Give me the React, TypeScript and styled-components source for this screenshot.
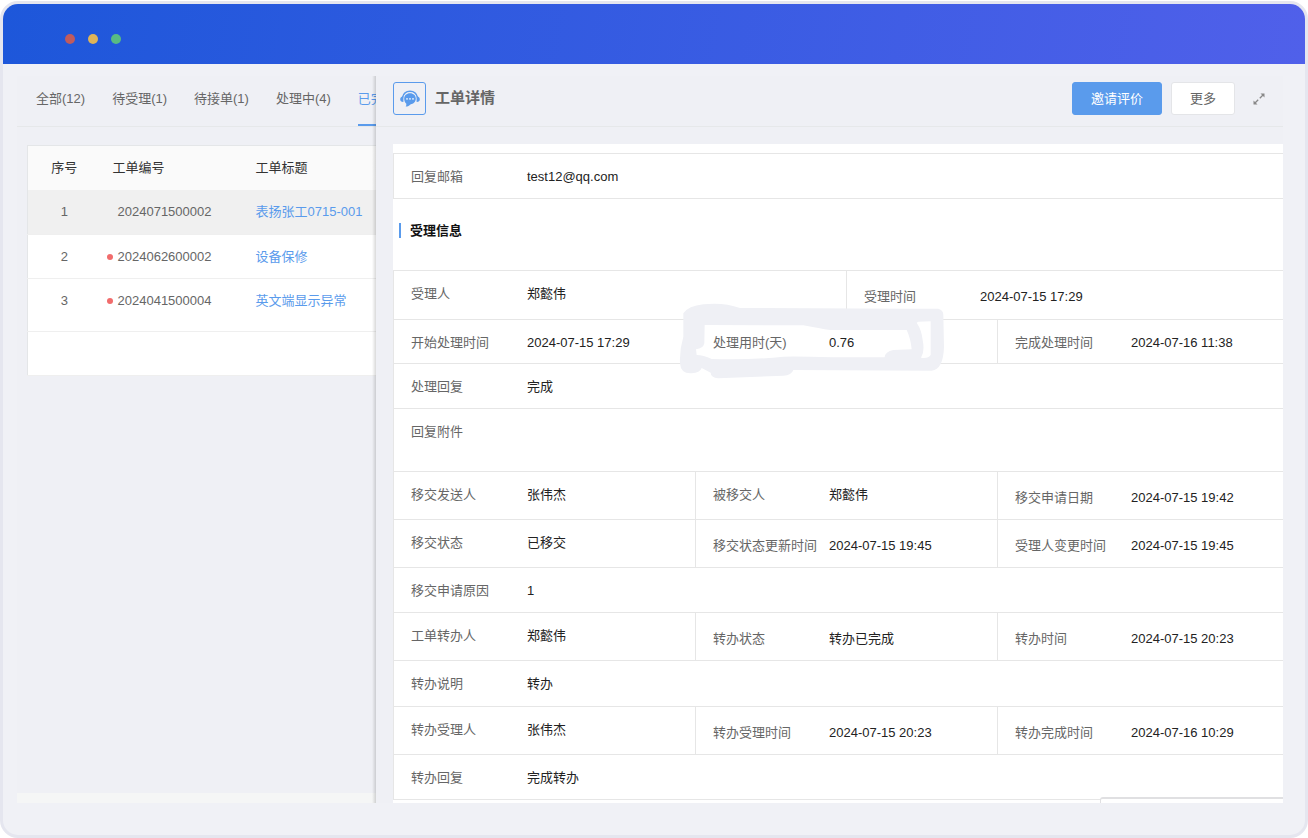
import React from 'react';
import styled, { createGlobalStyle } from 'styled-components';

const Global = createGlobalStyle`
  * { box-sizing: border-box; }
  body {
    margin: 0;
    background: #fff;
    font-family: "Liberation Sans", "Noto Sans CJK SC", sans-serif;
    font-size: 13px;
    line-height: 20px;
    color: #666;
  }
`;

const Page = styled.div`
  min-height: 100vh;
  display: flex;
  padding-top: 1px;
`;

const Frame = styled.div`
  flex: 1;
  min-width: 0;
  display: flex;
  flex-direction: column;
  border: 3px solid #e5e6ef;
  border-radius: 18px;
  background: #f0f1f6;
  overflow: hidden;
`;

const TitleBar = styled.header`
  height: 60px;
  display: flex;
  align-items: center;
  gap: 13px;
  padding: 10px 62px 0;
  background: linear-gradient(100deg, #1d57da, #5060ea);
`;

const Dot = styled.span<{ $color: string; $size?: number }>`
  flex: none;
  width: ${(p) => p.$size ?? 10}px;
  height: ${(p) => p.$size ?? 10}px;
  border-radius: 50%;
  background: ${(p) => p.$color};
`;

const Main = styled.main`
  flex: 1;
  display: flex;
  margin: 12px 22px 32px 14px;
  background: #eff0f5;
`;

const ListPane = styled.section`
  position: relative;
  flex: none;
  width: 359px;
  display: flex;
  flex-direction: column;
  overflow: hidden;
  &::after {
    content: "";
    position: absolute;
    top: 0;
    right: 0;
    bottom: 0;
    width: 4px;
    background: linear-gradient(to right, transparent, rgba(0, 0, 0, 0.15));
  }
`;

const ListFooter = styled.div`
  height: 10px;
  margin-top: auto;
  background: #f5f6f6;
`;

const Tabs = styled.nav`
  display: flex;
  gap: 27px;
  height: 51px;
  padding-left: 19px;
  border-bottom: 1px solid #e6e8ea;
`;

const Tab = styled.button<{ $active?: boolean }>`
  flex: none;
  height: 50px;
  padding: 0 0 3px;
  border: 0;
  border-bottom: 2px solid ${(p) => (p.$active ? '#5a9bec' : 'transparent')};
  background: none;
  font: inherit;
  color: ${(p) => (p.$active ? '#5a9bec' : '#666')};
`;

const Tickets = styled.table`
  width: 560px;
  flex: none;
  margin: 18px 0 0 10px;
  border: 1px solid #e4e6e8;
  border-collapse: collapse;
  table-layout: fixed;
  background: #fff;
`;

const Th = styled.th<{ $width?: number; $center?: boolean }>`
  width: ${(p) => (p.$width ? `${p.$width}px` : 'auto')};
  height: 44px;
  padding: 0 12px;
  background: #fafafa;
  font-weight: 400;
  color: #333;
  text-align: ${(p) => (p.$center ? 'center' : 'left')};
`;

const Row = styled.tr<{ $selected?: boolean; $height: number }>`
  height: ${(p) => p.$height}px;
  background: ${(p) => (p.$selected ? '#f0f0f0' : '#fff')};
  border-bottom: 1px solid #efefef;
`;

const Td = styled.td<{ $center?: boolean }>`
  padding: 12px 12px 0;
  vertical-align: top;
  text-align: ${(p) => (p.$center ? 'center' : 'left')};
`;

const TicketNo = styled.span`
  display: flex;
  align-items: center;
  gap: 5px;
  margin-left: -6px;
`;

const TicketLink = styled.a`
  color: #5a9bec;
  text-decoration: none;
  white-space: nowrap;
`;

const DetailPane = styled.section`
  flex: 1;
  min-width: 0;
  display: flex;
  flex-direction: column;
`;

const DetailHead = styled.div`
  height: 51px;
  display: flex;
  align-items: center;
  padding: 0 17px 5px;
  border-bottom: 1px solid #e6e8ea;
`;

const Badge = styled.span`
  display: grid;
  place-items: center;
  width: 33px;
  height: 33px;
  border: 1px solid #5a9bec;
  border-radius: 3px;
`;

const Title = styled.h1`
  flex: 1;
  margin: 0 0 2px 9px;
  font-size: 15px;
  font-weight: 700;
  color: #666;
`;

const Button = styled.button<{ $primary?: boolean }>`
  height: 33px;
  margin-left: 9px;
  padding: 0 18px;
  border: 1px solid ${(p) => (p.$primary ? '#5a9bec' : '#e4e5e8')};
  border-radius: 3px;
  background: ${(p) => (p.$primary ? '#5a9bec' : '#fff')};
  font: inherit;
  color: ${(p) => (p.$primary ? '#fff' : '#666')};
`;

const IconButton = styled.button`
  display: flex;
  margin-left: 17px;
  padding: 0;
  border: 0;
  background: none;
`;

const Sheet = styled.div`
  position: relative;
  flex: 1;
  margin: 17px 0 0 17px;
  padding-top: 9px;
  background: #fff;
  overflow: hidden;
`;

const Section = styled.h2`
  display: flex;
  align-items: center;
  height: 71px;
  margin: 0;
  padding: 0 6px 8px;
  font-size: 13px;
  font-weight: 700;
  color: #111;
  &::before {
    content: "";
    width: 2px;
    height: 15px;
    margin-right: 9px;
    background: #5a9bec;
  }
`;

const Fields = styled.dl`
  margin: 0 -16px 0 0;
  border: 1px solid #e6e6e6;
  border-right: 0;
`;

const FieldRow = styled.div<{ $height: number }>`
  position: relative;
  display: flex;
  height: ${(p) => p.$height}px;
  & + & { border-top: 1px solid #e6e6e6; }
`;

const Field = styled.div<{ $middle?: boolean }>`
  flex: 1 1 0;
  display: flex;
  align-items: ${(p) => (p.$middle ? 'center' : 'flex-start')};
  padding: ${(p) => (p.$middle ? '4px 0 0 17px' : '13px 0 0 17px')};
  white-space: nowrap;
  & + & { border-left: 1px solid #e6e6e6; }
`;

const Term = styled.dt`
  width: 116px;
  color: #666;
`;

const Value = styled.dd`
  margin: 0;
  color: #222;
`;

const Brush = styled.svg`
  position: absolute;
  left: 266px;
  top: -40px;
  width: 320px;
  height: 110px;
  z-index: 1;
`;

const Popover = styled.div`
  position: absolute;
  right: 0;
  bottom: 0;
  width: 183px;
  height: 6px;
  border: 2px solid #e0e0e2;
  border-width: 2px 0 0 1px;
  border-radius: 3px 0 0 0;
  background: #fff;
`;

type Item = [label: string, value: string, middle?: boolean];
type Line = { height: number; items: Item[]; marked?: boolean };

const lines: Line[] = [
  { height: 48, items: [['受理人', '郑懿伟'], ['受理时间', '2024-07-15 17:29', true]] },
  {
    height: 44,
    marked: true,
    items: [
      ['开始处理时间', '2024-07-15 17:29'],
      ['处理用时(天)', '0.76'],
      ['完成处理时间', '2024-07-16 11:38'],
    ],
  },
  { height: 45, items: [['处理回复', '完成']] },
  { height: 63, items: [['回复附件', '']] },
  {
    height: 48,
    items: [['移交发送人', '张伟杰'], ['被移交人', '郑懿伟'], ['移交申请日期', '2024-07-15 19:42', true]],
  },
  {
    height: 48,
    items: [
      ['移交状态', '已移交'],
      ['移交状态更新时间', '2024-07-15 19:45', true],
      ['受理人变更时间', '2024-07-15 19:45', true],
    ],
  },
  { height: 45, items: [['移交申请原因', '1']] },
  {
    height: 48,
    items: [['工单转办人', '郑懿伟'], ['转办状态', '转办已完成', true], ['转办时间', '2024-07-15 20:23', true]],
  },
  { height: 46, items: [['转办说明', '转办']] },
  {
    height: 48,
    items: [
      ['转办受理人', '张伟杰'],
      ['转办受理时间', '2024-07-15 20:23', true],
      ['转办完成时间', '2024-07-16 10:29', true],
    ],
  },
  { height: 45, items: [['转办回复', '完成转办']] },
];

const tickets = [
  { no: '2024071500002', title: '表扬张工0715-001', unread: false, height: 45 },
  { no: '2024062600002', title: '设备保修', unread: true, height: 44 },
  { no: '2024041500004', title: '英文端显示异常', unread: true, height: 53 },
];

const tabs = ['全部(12)', '待受理(1)', '待接单(1)', '处理中(4)', '已完成(4)'];

const HeadsetIcon = () => (
  <svg width="20" height="18" viewBox="0 0 20 18" fill="none">
    <path d="M2.500 7.500C3.500 3 6.500 1.200 10 1.200S16.500 3 17.500 7.500" stroke="#5a9bec" strokeWidth="1.400" />
    <path d="M3.400 6.200v5.800C1.400 12.100.2 10.900.2 9.200s1.200-2.900 3.200-3zM16.600 6.200v5.800c2 .1 3.200-1.100 3.200-2.800s-1.200-2.900-3.200-3z" fill="#5a9bec" />
    <path d="M10 3.200c3.500 0 5.800 2.300 5.800 5.400 0 3.200-2.300 5.500-5.400 5.800-1 1.200-2.500 2-4.700 2.200.6-.9.800-1.800.6-2.800-1.400-1.100-2.100-2.900-2.100-5.200 0-3.100 2.300-5.400 5.800-5.400z" fill="#5a9bec" />
    <g fill="#fff"><circle cx="7" cy="8.900" r=".8" /><circle cx="10" cy="8.900" r=".8" /><circle cx="13" cy="8.900" r=".8" /></g>
  </svg>
);

const ExpandIcon = () => (
  <svg width="14" height="14" viewBox="0 0 14 14" fill="none" stroke="#888">
    <path d="M7.800 6.200L11 3M6.200 7.800L3 11" strokeWidth="1.300" />
    <path d="M8.500 1.500h4v4zM5.500 12.500h-4v-4z" fill="#888" stroke="none" />
  </svg>
);

const FieldList = ({ items }: { items: Item[] }) => (
  <>
    {items.map(([label, value, middle]) => (
      <Field key={label} $middle={middle}>
        <Term>{label}</Term>
        <Value>{value}</Value>
      </Field>
    ))}
  </>
);

export default function App() {
  return (
    <>
      <Global />
      <Page>
        <Frame>
          <TitleBar>
            <Dot $color="#c05b5e" />
            <Dot $color="#dfb458" />
            <Dot $color="#58bb83" />
          </TitleBar>
          <Main>
            <ListPane>
              <Tabs>
                {tabs.map((t, i) => (
                  <Tab key={t} type="button" $active={i === 4}>{t}</Tab>
                ))}
              </Tabs>
              <Tickets>
                <thead>
                  <tr>
                    <Th $width={73} $center>序号</Th>
                    <Th $width={143}>工单编号</Th>
                    <Th>工单标题</Th>
                  </tr>
                </thead>
                <tbody>
                  {tickets.map((t, i) => (
                    <Row key={t.no} $selected={i === 0} $height={t.height}>
                      <Td $center>{i + 1}</Td>
                      <Td>
                        <TicketNo>
                          <Dot $size={6} $color={t.unread ? '#f16c6c' : 'transparent'} />
                          {t.no}
                        </TicketNo>
                      </Td>
                      <Td><TicketLink href="#">{t.title}</TicketLink></Td>
                    </Row>
                  ))}
                  <Row $height={44}><td colSpan={3} /></Row>
                </tbody>
              </Tickets>
              <ListFooter />
            </ListPane>
            <DetailPane>
              <DetailHead>
                <Badge><HeadsetIcon /></Badge>
                <Title>工单详情</Title>
                <Button type="button" $primary>邀请评价</Button>
                <Button type="button">更多</Button>
                <IconButton type="button" aria-label="展开"><ExpandIcon /></IconButton>
              </DetailHead>
              <Sheet>
                <Fields>
                  <FieldRow $height={44}><FieldList items={[['回复邮箱', 'test12@qq.com']]} /></FieldRow>
                </Fields>
                <Section>受理信息</Section>
                <Fields>
                  {lines.map((line, i) => (
                    <FieldRow key={i} $height={line.height}>
                      <FieldList items={line.items} />
                      {line.marked && (
                        <Brush viewBox="0 0 960 330" aria-hidden="true">
                          <path
                            fill="#eff0f5"
                            fillRule="evenodd"
                            d="M70 100Q85 78 130 73Q190 66 240 84L740 86L835 86Q850 90 850 105L852 200Q850 268 815 272L400 270Q395 286 370 287L175 295Q152 292 152 278L125 264Q120 278 95 280Q62 282 60 250Q58 210 70 170ZM134 135L430 136Q480 146 510 150L740 150Q752 175 755 208L700 210Q675 215 674 232L520 232Q400 228 370 230Q280 240 155 237Q130 225 110 225L108 208Q130 205 133 190ZM775 125L812 124L812 225Q805 236 783 233Q795 215 788 180Q785 150 770 128Z"
                          />
                        </Brush>
                      )}
                    </FieldRow>
                  ))}
                </Fields>
                <Popover />
              </Sheet>
            </DetailPane>
          </Main>
        </Frame>
      </Page>
    </>
  );
}
